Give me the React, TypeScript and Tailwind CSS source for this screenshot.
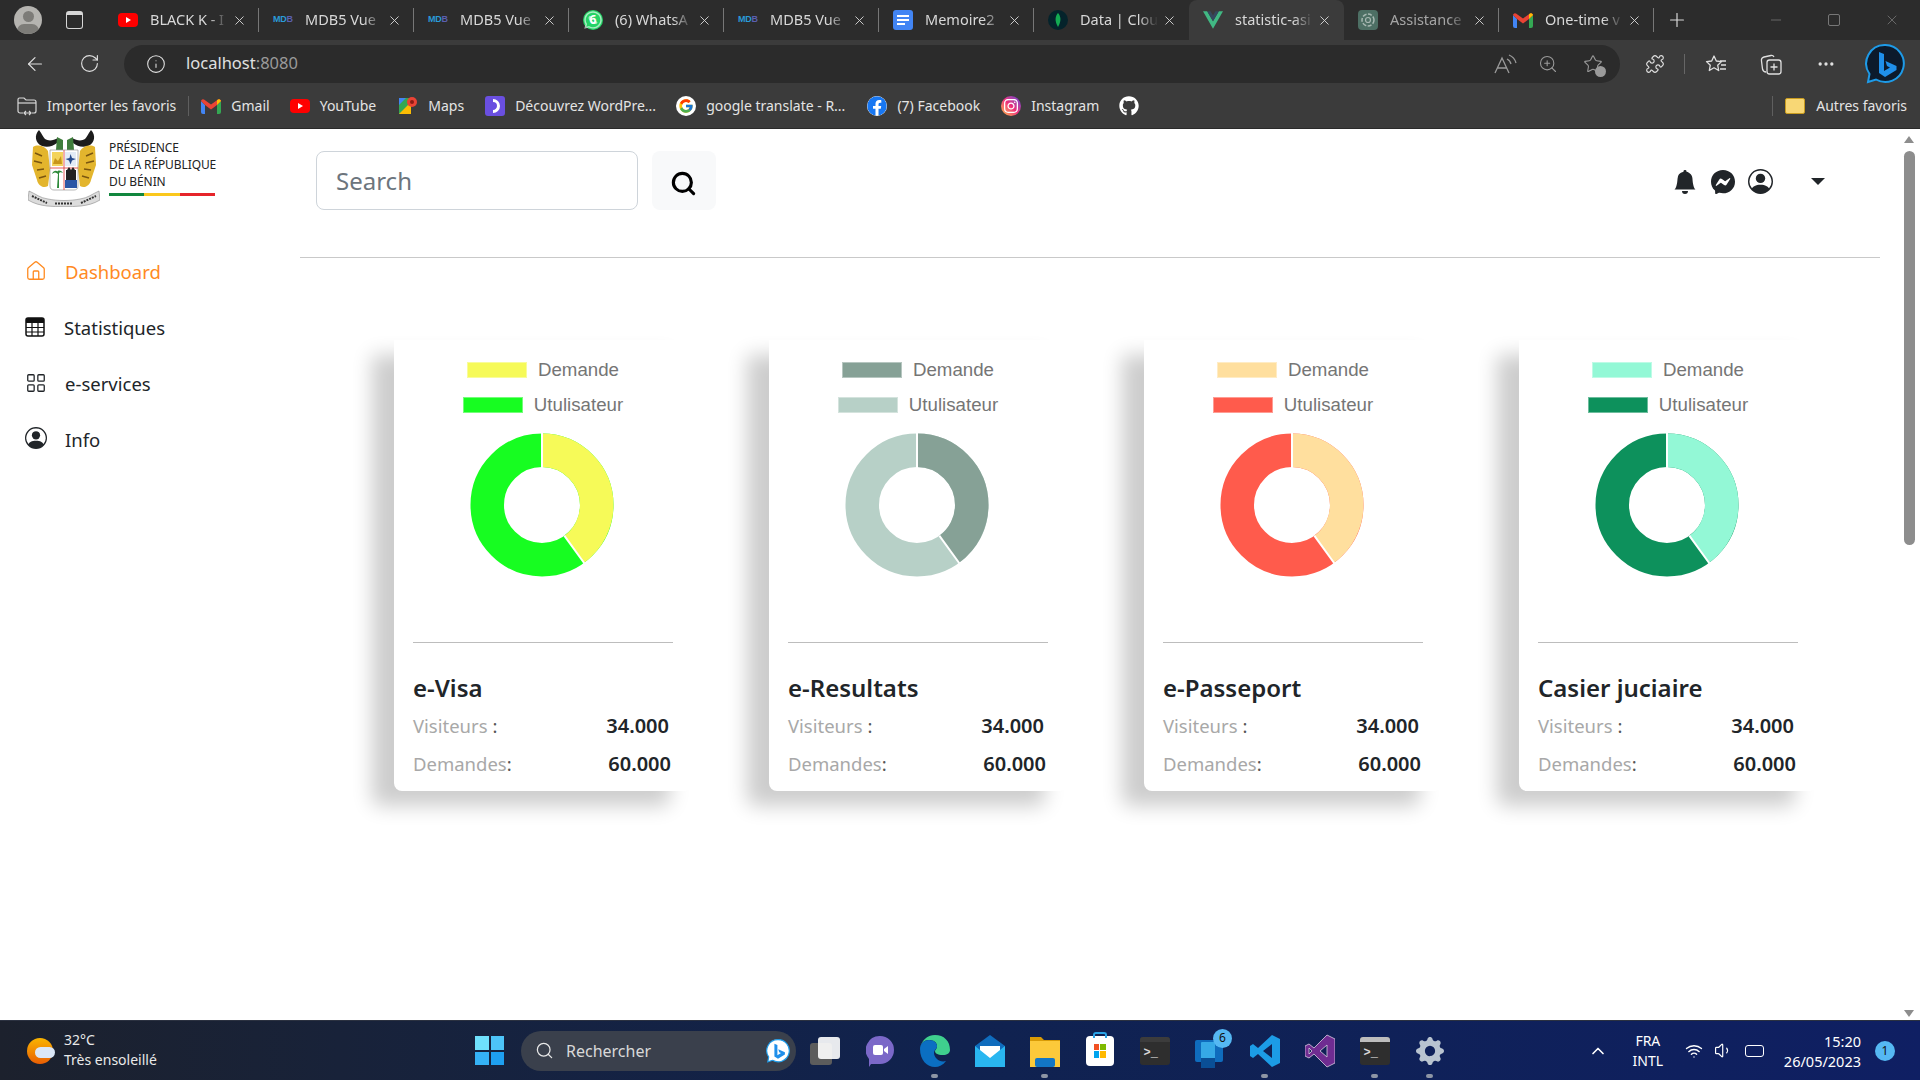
import { ArrowLeft, Info, Minus, MoreHorizontal, Plus, Puzzle, RotateCw, Search, Star, X, ZoomIn, ChevronUp, Wifi, Volume1, LayoutGrid, House } from "lucide-react";
import { BsBellFill, BsMessenger, BsPersonCircle, BsGearFill } from "react-icons/bs";
import { FaFacebook, FaGithub, FaInstagram, FaWhatsapp } from "react-icons/fa";
import { FcGoogle } from "react-icons/fc";

const YoutubeIcon = () => (
  <svg viewBox="0 0 20 20" className="w-5 h-5">
    <rect x="0" y="3" width="20" height="14" rx="4" fill="#f00" />
    <path d="M8 7l5 3-5 3z" fill="#fff" />
  </svg>
);

const MdbIcon = () => (
  <span className="w-5 text-[9px] font-bold tracking-tight text-[#2a9bd8] font-['Liberation_Sans',sans-serif]">
    MD<span className="text-[#5a5fb0]">B</span>
  </span>
);

const GmailIcon = () => (
  <svg viewBox="0 0 20 16" className="w-5 h-4">
    <path d="M0 3v11a2 2 0 0 0 2 2h2V7z" fill="#4285f4" />
    <path d="M20 3v11a2 2 0 0 1-2 2h-2V7z" fill="#34a853" />
    <path d="M0 3l4 4 6 4.500 6-4.500 4-4a2 2 0 0 0-3-1.500L10 6.500 3 1.500A2 2 0 0 0 0 3z" fill="#ea4335" />
    <path d="M16 7l4-4a2 2 0 0 0-3-1.500L16 2.200z" fill="#fbbc04" />
  </svg>
);

const VueIcon = () => (
  <svg viewBox="0 0 24 21" className="w-5 h-5">
    <path d="M0 0h5l7 12L19 0h5L12 21z" fill="#41b883" />
    <path d="M5 0h4l3 5 3-5h4l-7 12z" fill="#34495e" />
  </svg>
);

const DocsIcon = () => (
  <svg viewBox="0 0 20 20" className="w-5 h-5">
    <rect x="0" y="0" width="20" height="20" rx="3" fill="#4285f4" />
    <path d="M4 5h12v2H4zM4 9h12v2H4zM4 13h8v2H4z" fill="#fff" />
  </svg>
);

const MongoIcon = () => (
  <svg viewBox="0 0 20 20" className="w-5 h-5">
    <circle cx="10" cy="10" r="10" fill="#04232b" />
    <path d="M10 3c3 3.500 3.500 8 0 14-3.500-6-3-10.500 0-14z" fill="#13aa52" />
  </svg>
);

const GptIcon = () => (
  <svg viewBox="0 0 20 20" className="w-5 h-5">
    <rect width="20" height="20" rx="4" fill="#4d6f64" />
    <circle cx="10" cy="10" r="6" fill="none" stroke="#a7b8b2" strokeWidth="1.500" strokeDasharray="4 1.500" />
    <circle cx="10" cy="10" r="2.500" fill="none" stroke="#a7b8b2" strokeWidth="1.200" />
  </svg>
);

const WhatsappIcon = () => (
  <span className="w-5 h-5 rounded-full bg-[#25d366] flex items-center justify-center text-white text-[12px] font-bold relative">
    <FaWhatsapp className="absolute w-5 h-5 text-white opacity-60" />
    6
  </span>
);

const MapsIcon = () => (
  <svg viewBox="0 0 20 20" className="w-5 h-5">
    <path d="M1 2h12v16H1z" fill="#34a853" />
    <path d="M1 18L13 6v12z" fill="#fbbc04" />
    <path d="M1 2h7L1 9z" fill="#4285f4" />
    <circle cx="14" cy="6" r="5" fill="#ea4335" />
    <circle cx="14" cy="6" r="2" fill="#8e1c14" />
  </svg>
);

const WpIcon = () => (
  <svg viewBox="0 0 20 20" className="w-5 h-5">
    <rect width="20" height="20" rx="3" fill="#6a4fe0" />
    <path d="M8 4.500a5.500 5.500 0 0 1 0 11" fill="none" stroke="#fff" strokeWidth="3" />
  </svg>
);

const BingIcon = ({ big }: { big?: boolean }) => (
  <svg viewBox="0 0 40 40" className={big ? "w-[40px] h-[40px]" : "w-[24px] h-[30px]"}>
    <path d="M20 1a18.500 18.500 0 1 1-9 34.500L3 38l1.500-8A18.500 18.500 0 0 1 20 1z" fill={big ? "#0c1a2c" : "#fff"} stroke="#1e9be8" strokeWidth="2" />
    <path d="M14 8l5 2v17l6-3.500-3-1.500-1.500-5 11 5v4l-11.500 7-6-4z" fill="#1f8fea" />
  </svg>
);

const FavoritesIcon = () => (
  <svg viewBox="0 0 22 20" fill="none" stroke="currentColor" strokeWidth="1.300" strokeLinejoin="round" className="w-[22px] h-[20px]">
    <path d="M9 2l2.300 5 5.200.6-3.800 3.600 1 5.300L9 13.800l-4.700 2.700 1-5.300L1.500 7.600 6.700 7z" />
    <path d="M15 7h6M16 11h5M15 15h6" />
  </svg>
);

const CollectionsIcon = () => (
  <svg viewBox="0 0 22 22" fill="none" stroke="currentColor" strokeWidth="1.300" className="w-[22px] h-[22px]">
    <path d="M6 19c-2 0-3-1-3.500-3L1.500 8c-.3-2 .5-3.500 2.500-4l7-1.500c1.500-.3 2.500.5 3 1.500" />
    <rect x="7" y="7" width="14" height="14" rx="2.500" />
    <path d="M14 10.500v7M10.500 14h7" />
  </svg>
);

const ReadAloudIcon = () => (
  <svg viewBox="0 0 24 22" fill="none" stroke="currentColor" strokeWidth="1.300" className="w-[24px] h-[22px]">
    <path d="M2 20L9 5l7 15M4.500 15h9" />
    <path d="M14 6c2 1 3.500 2.500 4 5M16 2c3.500 1.500 6 4 7 8" />
  </svg>
);

const ImportIcon = () => (
  <svg viewBox="0 0 20 20" fill="none" stroke="#d8d8d8" strokeWidth="1.200" className="w-5 h-5">
    <path d="M6 17H3a2 2 0 0 1-2-2V3.500A1.500 1.500 0 0 1 2.500 2H7l2 2h8a2 2 0 0 1 2 2v9a2 2 0 0 1-2 2h-2" />
    <path d="M1 7h18" />
    <path d="M7 17h7M9 15l-2 2 2 2M12 15l2 2-2 2" />
  </svg>
);

const tabs = [
  { title: "BLACK K - I", icon: <YoutubeIcon /> },
  { title: "MDB5 Vue", icon: <MdbIcon /> },
  { title: "MDB5 Vue", icon: <MdbIcon /> },
  { title: "(6) WhatsA", icon: <WhatsappIcon /> },
  { title: "MDB5 Vue", icon: <MdbIcon /> },
  { title: "Memoire2", icon: <DocsIcon /> },
  { title: "Data | Clou", icon: <MongoIcon /> },
  { title: "statistic-asi", icon: <VueIcon />, active: true },
  { title: "Assistance", icon: <GptIcon /> },
  { title: "One-time v", icon: <GmailIcon /> },
];

const bookmarks = [
  { name: "Gmail", icon: <GmailIcon />, gap: "ml-[12px]" },
  { name: "YouTube", icon: <YoutubeIcon />, gap: "ml-[20px]" },
  { name: "Maps", icon: <MapsIcon />, gap: "ml-[22px]" },
  { name: "Découvrez WordPre...", icon: <WpIcon />, gap: "ml-[21px]" },
  { name: "google translate - R...", icon: <FcGoogle className="w-5 h-5 bg-white rounded-full p-[2px]" />, gap: "ml-[20px]" },
  { name: "(7) Facebook", icon: <FaFacebook className="w-5 h-5 text-[#1877f2] bg-white rounded-full" />, gap: "ml-[22px]" },
  {
    name: "Instagram",
    icon: (
      <span className="w-5 h-5 rounded-full bg-gradient-to-tr from-[#fdb52c] via-[#ee2a7b] to-[#6228d7] flex items-center justify-center">
        <FaInstagram className="w-4 h-4 text-white" />
      </span>
    ),
    gap: "ml-[21px]",
  },
];

const BrowserChrome = () => (
  <div className="shrink-0 font-['Noto_Sans',sans-serif]">
    {/* Tab strip */}
    <div className="h-[40px] bg-[#2c2c2c] flex items-start relative">
      <div className="w-[104px] h-[40px] shrink-0 flex items-center pl-[14px] gap-[24px]">
        <span className="w-[28px] h-[28px] rounded-full bg-[#b5b4b0] overflow-hidden relative flex justify-center">
          <span className="absolute top-[5px] w-[11px] h-[11px] rounded-full bg-[#7d7c78]" />
          <span className="absolute top-[18px] w-[22px] h-[14px] rounded-full bg-[#7d7c78]" />
        </span>
        <span className="w-[17px] h-[18px] rounded-[3px] border border-[#d6d6d6] border-t-[4px]" />
      </div>
      {tabs.map((tab, idx) => (
        <div
          key={idx}
          className={`w-[155px] shrink-0 relative z-10 ${tab.active ? "bg-[#3b3b3b] rounded-t-lg h-[45px]" : "h-[40px]"}`}
        >
          <div className="h-[40px] flex items-center pl-[14px] pr-[12px]">
            <span className="w-5 flex justify-center shrink-0">{tab.icon}</span>
            <span className={`ml-3 w-[78px] whitespace-nowrap overflow-hidden text-[14.500px] text-[#d8d8d8] [mask-image:linear-gradient(to_right,black_75%,transparent)] ${tab.title.startsWith("Assist") ? "opacity-70" : ""}`}>
              {tab.title}
            </span>
            <X className="ml-auto w-[15px] h-[15px] text-[#d4d4d4]" strokeWidth={1.500} />
          </div>
          {!tab.active && idx !== 6 && <span className="absolute right-0 top-[8px] h-[24px] w-px bg-[#777]" />}
        </div>
      ))}
      <div className="h-[40px] flex items-center ml-[12px]">
        <Plus className="w-[22px] h-[22px] text-[#d8d8d8]" strokeWidth={1.300} />
      </div>
      <div className="ml-auto h-[40px] flex items-center gap-[44px] pr-[20px] text-[#777]">
        <Minus className="w-4 h-4" strokeWidth={1.200} />
        <span className="w-[12px] h-[12px] border border-[#777] rounded-[2px]" />
        <X className="w-[16px] h-[16px]" strokeWidth={1.200} />
      </div>
    </div>

    {/* Address bar */}
    <div className="h-[45px] pt-[2px] bg-[#3b3b3b] flex items-center text-[#e0e0e0]">
      <ArrowLeft className="ml-[24px] w-[22px] h-[22px]" strokeWidth={1.300} />
      <RotateCw className="ml-[33px] w-[21px] h-[21px]" strokeWidth={1.300} />
      <div className="ml-[24px] w-[1496px] h-[38px] rounded-full bg-[#2b2b2b] flex items-center">
        <Info className="ml-[22px] w-[20px] h-[20px]" strokeWidth={1.300} />
        <span className="ml-[20px] text-[16.500px]">localhost<span className="text-[#9a9a9a]">:8080</span></span>
        <div className="ml-auto flex items-center pr-[17px] text-[#9a9a9a]">
          <ReadAloudIcon />
          <ZoomIn className="ml-[21px] w-[20px] h-[20px]" strokeWidth={1.300} />
          <span className="relative ml-[25px]">
            <Star className="w-[20px] h-[20px]" strokeWidth={1.300} />
            <span className="absolute -right-[3px] -bottom-[3px] w-[11px] h-[11px] rounded-full bg-[#9a9a9a]" />
          </span>
        </div>
      </div>
      <Puzzle className="ml-[25px] w-[20px] h-[20px]" strokeWidth={1.400} />
      <span className="ml-[19px] w-px h-[20px] bg-[#666]" />
      <span className="ml-[20px]"><FavoritesIcon /></span>
      <span className="ml-[33px]"><CollectionsIcon /></span>
      <MoreHorizontal className="ml-[34px] w-[20px] h-[20px]" strokeWidth={2} />
      <span className="ml-[29px]"><BingIcon big /></span>
    </div>

    {/* Favorites bar */}
    <div className="h-[44px] pb-[2px] bg-[#3b3b3b] flex items-center text-[14px] text-[#e4e4e4] border-b border-[#2a2a2a]">
      <span className="ml-[17px]"><ImportIcon /></span>
      <span className="ml-[10px] whitespace-nowrap">Importer les favoris</span>
      <span className="ml-[12px] w-px h-[20px] bg-[#5f5f5f]" />
      {bookmarks.map((b) => (
        <div key={b.name} className={`flex items-center gap-[10px] ${b.gap}`}>
          {b.icon}
          <span className="whitespace-nowrap">{b.name}</span>
        </div>
      ))}
      <FaGithub className="ml-[20px] w-5 h-5 text-white" />
      <div className="ml-auto flex items-center pr-[13px]">
        <span className="w-px h-[20px] bg-[#5f5f5f] mr-[12px]" />
        <span className="w-[20px] h-[16px] bg-[#f8d775] border border-[#c89b1f] rounded-[2px]" />
        <span className="ml-[11px] whitespace-nowrap">Autres favoris</span>
      </div>
    </div>
  </div>
);

const BeninLogo = () => (
  <svg viewBox="0 0 72 78" className="w-[72px] h-[78px] shrink-0">
    {/* horns */}
    <path d="M11 1C6 6 7 14 14 17c6 2 11 0 15-3l1-5c-5 3-10 3-13 1-2-2-3-5-6-9z" fill="#1c1c1c" />
    <path d="M63 1c5 5 4 13-3 16-6 2-11 0-15-3l-1-5c5 3 10 3 13 1 2-2 3-5 6-9z" fill="#1c1c1c" />
    <path d="M29 8l6 3v10h-7zM45 8l-6 3v10h7z" fill="#3f7d3c" />
    {/* leopards */}
    <path d="M5 18c5-3 12-1 15 4l2 19-2 16c-5 3-10-1-11-6L4 36z" fill="#e3b52d" />
    <path d="M67 18c-5-3-12-1-15 4l-2 19 2 16c5 3 10-1 11-6l5-15z" fill="#e3b52d" />
    <path d="M7 24l7 3M6 32l8 2M9 41l7-1M11 49l7-2M65 24l-7 3M66 32l-8 2M63 41l-7-1M61 49l-7-2" stroke="#7a5610" strokeWidth="1.500" />
    {/* shield */}
    <path d="M22 21h28v36c0 3-2 4-4 4H26c-2 0-4-1-4-4z" fill="#fff" stroke="#999" strokeWidth=".7" />
    <rect x="24" y="23" width="11" height="14" fill="#f3d35b" />
    <path d="M25 35l2-6 3 3 3-5 1 8z" fill="#c8951a" />
    <rect x="37" y="23" width="11" height="14" fill="#e3ebf6" />
    <path d="M42.500 25l1.500 4 4 1-4 1.500-1.500 4-1.500-4-3.500-1.500 4-1z" fill="#274a8c" />
    <path d="M22 39h28M36 21v40" stroke="#d33" strokeWidth=".8" />
    <path d="M30 45c-2-2-4-2-6 0 1-3 4-4 5.500-2.500C30 41 33 41 35 44c-2-1-3.500-1-4 .5V59h-2z" fill="#2d8a3a" />
    <rect x="38" y="41" width="10" height="10" fill="#222" />
    <path d="M39 41l2-3 2 3 2-3 2 3z" fill="#222" />
    <rect x="37" y="51" width="12" height="8" fill="#2b56a6" />
    {/* motto ribbon */}
    <path d="M1 62c7 3 11 7 19 8 10 2 22 2 32 0 8-1 12-5 19-8l1 9c-7 4-12 5-19 6-11 1-23 1-34 0-7-1-12-2-19-6z" fill="#dcdcdc" stroke="#8a8a8a" strokeWidth=".6" />
    <path d="M4 67l15 7M27 74.500h18M53 74l15-7" stroke="#333" strokeWidth="2" strokeDasharray="2 1" />
  </svg>
);

const TableIcon = () => (
  <svg viewBox="0 0 20 20" className="w-[20px] h-[20px]">
    <rect x="1" y="1" width="18" height="18" rx="2" fill="none" stroke="#111" strokeWidth="1.500" />
    <path d="M1 3a2 2 0 0 1 2-2h14a2 2 0 0 1 2 2v3H1z" fill="#111" />
    <path d="M1 10.500h18M1 15h18M7 6v13M13 6v13" stroke="#111" strokeWidth="1.200" />
  </svg>
);

const navItems = [
  { name: "Dashboard", icon: <House className="w-[22px] h-[22px] -mt-[3px]" strokeWidth={1.400} />, cls: "text-[#ff8a1f]", iconBox: "ml-[25px] mr-[18px]" },
  { name: "Statistiques", icon: <TableIcon />, cls: "text-[#212529]", iconBox: "ml-[25px] mr-[19px] -mt-[2px]" },
  { name: "e-services", icon: <LayoutGrid className="w-[22px] h-[22px]" strokeWidth={1.400} />, cls: "text-[#212529]", iconBox: "ml-[25px] mr-[18px] -mt-[3px]" },
  { name: "Info", icon: <BsPersonCircle className="w-[22px] h-[22px]" />, cls: "text-[#212529]", iconBox: "ml-[25px] mr-[18px] -mt-[5px]" },
];

const Sidebar = () => (
  <aside className="w-[300px] shrink-0">
    <div className="h-[115px] flex items-start pl-[28px]">
      <BeninLogo />
      <div className="ml-[9px] mt-[10px] text-[12px] leading-[17px] text-[#222] tracking-[-0.1px] whitespace-nowrap">
        <div>PRÉSIDENCE</div>
        <div>DE LA RÉPUBLIQUE</div>
        <div>DU BÉNIN</div>
        <div className="mt-[3px] w-[106px] h-[3px] flex">
          <span className="flex-1 bg-[#12873e]" />
          <span className="flex-1 bg-[#fbc81d]" />
          <span className="flex-1 bg-[#e6242a]" />
        </div>
      </div>
    </div>
    <nav>
      {navItems.map((item) => (
        <div key={item.name} className={`h-[56px] flex items-center text-[18.500px] ${item.cls}`}>
          <span className={item.iconBox}>{item.icon}</span>
          {item.name}
        </div>
      ))}
    </nav>
  </aside>
);

const Donut = ({ first, second }: { first: string; second: string }) => (
  <svg viewBox="-72 -72 144 144" className="w-[144px] h-[144px] block mx-auto">
    <circle r="54.750" fill="none" stroke={second} strokeWidth="33.500" />
    <circle r="54.750" fill="none" stroke={first} strokeWidth="33.500" pathLength={100} strokeDasharray="40 60" transform="rotate(-90)" />
    <path d="M0 -72V-37M22.300 30.700L42.500 58.500" stroke="#fff" strokeWidth="2" />
  </svg>
);

const LegendRow = ({ color, label }: { color: string; label: string }) => (
  <div className="flex items-center justify-center gap-[11px] h-[16px] text-[18.700px] text-[#757575] font-['Liberation_Sans',sans-serif]">
    <span className={`w-[60px] h-[16px] border border-white/40 ${color}`} />
    <span>{label}</span>
  </div>
);

const cards = [
  { title: "e-Visa", c1: "#f6fa58", c2: "#17fd21", b1: "bg-[#f6fa58]", b2: "bg-[#17fd21]" },
  { title: "e-Resultats", c1: "#86a196", c2: "#b7d0c7", b1: "bg-[#86a196]", b2: "bg-[#b7d0c7]" },
  { title: "e-Passeport", c1: "#ffdf9e", c2: "#ff5b4c", b1: "bg-[#ffdf9e]", b2: "bg-[#ff5b4c]" },
  { title: "Casier juciaire", c1: "#93f8d6", c2: "#0d915c", b1: "bg-[#93f8d6]", b2: "bg-[#0d915c]" },
];

const StatCard = ({ card }: { card: (typeof cards)[number] }) => (
  <div className="w-[298px] h-[451px] bg-white rounded-b-lg shadow-[-22px_15px_20px_rgba(0,0,0,0.2)] pt-[22px]">
    <div className="flex flex-col gap-[19px]">
      <LegendRow color={card.b1} label="Demande" />
      <LegendRow color={card.b2} label="Utulisateur" />
    </div>
    <div className="mt-[20px] pr-[2px]">
      <Donut first={card.c1} second={card.c2} />
    </div>
    <div className="mx-[19px] mt-[65px] border-t border-[#bdbdbd]" />
    <h3 className="ml-[19px] mt-[27px] text-[24px] leading-[36px] font-semibold text-[#212529]">{card.title}</h3>
    <div className="ml-[19px] mr-[23px] mt-[1px] h-[38px] flex items-center justify-between text-[18.500px]">
      <span className="text-[#a8a8a8]">Visiteurs <span className="text-[#555]">:</span></span>
      <span className="text-[20px] font-semibold text-[#212529]">34.000</span>
    </div>
    <div className="ml-[19px] mr-[21px] h-[38px] flex items-center justify-between text-[18.500px]">
      <span className="text-[#a8a8a8]">Demandes<span className="text-[#555]">:</span></span>
      <span className="text-[20px] font-semibold text-[#212529]">60.000</span>
    </div>
  </div>
);

const Main = () => (
  <main className="flex-1 min-w-0">
    <header className="h-[129px] border-b border-[#c9c9c9] flex items-start pt-[22px] pl-[16px]">
      <div className="w-[322px] h-[59px] rounded-lg border border-[#ced4da] flex items-center pl-[19px] text-[24px] text-[#6c757d]">Search</div>
      <button className="ml-[14px] w-[64px] h-[59px] rounded-lg bg-[#f8f9fa] flex items-center justify-center pt-[5px] pr-[2px]">
        <Search className="w-[27px] h-[27px] text-black" strokeWidth={2.800} />
      </button>
      <div className="ml-auto flex items-center h-[59px] pt-[2px] text-[#212529] pr-[55px]">
        <BsBellFill className="w-[24px] h-[24px]" />
        <BsMessenger className="ml-[14px] w-[24px] h-[24px]" />
        <BsPersonCircle className="ml-[13px] w-[25px] h-[25px]" />
        <span className="ml-[38px] w-0 h-0 border-x-[7px] border-x-transparent border-t-[7px] border-t-[#212529]" />
      </div>
    </header>
    <section className="mt-[82px] pl-[94px] flex gap-[77px]">
      {cards.map((card) => (
        <StatCard key={card.title} card={card} />
      ))}
    </section>
  </main>
);

const Scrollbar = () => (
  <div className="w-[40px] shrink-0 flex flex-col items-end pr-[5px] pt-[7px] pb-[3px]">
    <span className="w-0 h-0 mr-[1px] border-x-[5px] border-x-transparent border-b-[7px] border-b-[#8d8d8d]" />
    <span className="mt-[8px] w-[11px] h-[394px] rounded-full bg-[#8d8d8d]" />
    <span className="mt-auto w-0 h-0 mr-[1px] border-x-[5px] border-x-transparent border-t-[7px] border-t-[#8d8d8d]" />
  </div>
);

const TerminalIcon = ({ top }: { top: string }) => (
  <span className="w-[30px] h-[28px] rounded-[3px] bg-[#2e2e2e] relative block">
    <span className={`absolute top-0 left-0 w-full h-[5px] rounded-t-[3px] ${top}`} />
    <span className="absolute left-[4px] top-[9px] text-[12px] leading-[14px] font-bold text-[#d8d8d8] font-['Liberation_Mono',monospace]">&gt;_</span>
  </span>
);

const taskIcons = [
  {
    key: "views",
    node: (
      <span className="relative block w-[30px] h-[28px]">
        <span className="absolute left-0 bottom-0 w-[22px] h-[22px] rounded-[3px] bg-[#5c5c5c]" />
        <span className="absolute right-0 top-0 w-[22px] h-[22px] rounded-[3px] bg-white/90" />
      </span>
    ),
  },
  {
    key: "teams",
    node: (
      <svg viewBox="0 0 28 32" className="w-[28px] h-[32px]">
        <path d="M14 1a14 14 0 0 1 0 28H5l-2 3v-8A14 14 0 0 1 14 1z" fill="#7b68c8" />
        <rect x="7" y="10" width="10" height="10" rx="2" fill="#fff" />
        <path d="M18 14l4-3v8l-4-3z" fill="#fff" />
      </svg>
    ),
  },
  {
    key: "edge",
    dot: true,
    node: (
      <svg viewBox="0 0 30 34" className="w-[30px] h-[34px]">
        <path d="M15 1c9 0 15 6 15 15 0 3-3 5-7 5-6 0-8-2-8-4 0-1 2-2 2-5 0-4-4-6-8-6C3 6 0 11 0 15 1 7 7 1 15 1z" fill="#3fcf8e" />
        <path d="M0 15c0-6 5-9 9-9 5 0 8 3 8 6 0 3-3 4-3 7 0 5 6 10 12 8-3 4-7 6-11 6C7 33 0 26 0 15z" fill="#0b6fc2" />
      </svg>
    ),
  },
  {
    key: "mail",
    node: (
      <svg viewBox="0 0 30 34" className="w-[30px] h-[34px]">
        <path d="M0 12L15 1l15 11v20H0z" fill="#0f6cbd" />
        <path d="M5 12h20v8l-10 5-10-5z" fill="#fff" />
        <path d="M0 12l15 12 15-12v21H0z" fill="#29b6f0" />
      </svg>
    ),
  },
  {
    key: "files",
    dot: true,
    node: (
      <svg viewBox="0 0 30 32" className="w-[30px] h-[32px]">
        <path d="M0 2h11l3 3h16v4H0z" fill="#d99b06" />
        <rect y="6" width="30" height="26" fill="#fcc93a" />
        <rect x="5" y="23" width="20" height="9" rx="2" fill="#1276c5" />
      </svg>
    ),
  },
  {
    key: "store",
    node: (
      <span className="relative w-[28px] h-[30px] bg-white rounded-[4px] grid grid-cols-2 gap-px p-[8px]">
        <span className="absolute -top-[4px] left-[7px] w-[14px] h-[6px] rounded-t-[3px] border-2 border-b-0 border-[#2aa3e6]" />
        <span className="bg-[#f25022]" />
        <span className="bg-[#7fba00]" />
        <span className="bg-[#00a4ef]" />
        <span className="bg-[#ffb900]" />
      </span>
    ),
  },
  { key: "term1", node: <TerminalIcon top="bg-[#3c3c3c]" /> },
  {
    key: "outlook",
    badge: true,
    node: (
      <svg viewBox="0 0 30 34" className="w-[30px] h-[34px]">
        <rect x="0" y="6" width="28" height="22" rx="2" fill="#0f6cbd" />
        <rect x="6" y="8" width="14" height="26" rx="1" fill="#36a9e6" />
        <rect x="6" y="24" width="14" height="10" fill="#0a4f96" />
      </svg>
    ),
  },
  {
    key: "vscode",
    dot: true,
    node: (
      <svg viewBox="0 0 30 34" className="w-[30px] h-[34px]">
        <path d="M22 1l8 4v24l-8 4-14-13-5 4-3-2v-10l3-2 5 4zm0 9L13 17l9 7z" fill="#1c9ce6" />
      </svg>
    ),
  },
  {
    key: "vs",
    node: (
      <svg viewBox="0 0 30 34" className="w-[30px] h-[34px]">
        <path d="M22 1l8 4v24l-8 4-13-13-5 4-4-2V12l4-2 5 4zm0 10l-7 6 7 6zM4 14v6l3-3z" fill="#6f2c91" stroke="#d9cde2" strokeWidth=".8" />
      </svg>
    ),
  },
  { key: "term2", dot: true, node: <TerminalIcon top="bg-[#bdbdbd]" /> },
  { key: "settings", dot: true, node: <BsGearFill className="w-[28px] h-[28px] text-[#b9c4d0]" /> },
];

const Taskbar = () => (
  <footer className="h-[60px] shrink-0 border-t border-[#2b3140] bg-gradient-to-r from-[#1c212d] via-[#10224f] to-[#0f1f63] flex items-center text-white font-['Noto_Sans',sans-serif]">
    <div className="ml-[27px] w-[448px] shrink-0 flex items-center">
      <span className="relative w-[26px] h-[26px] rounded-full bg-gradient-to-b from-[#f8b400] to-[#e85d04]">
        <span className="absolute left-[8px] top-[9px] w-[20px] h-[11px] rounded-full bg-[#dbe7f7]" />
      </span>
      <div className="ml-[11px] -mt-[2px] text-[14px] leading-[20px] text-[#e9e9e9]">
        <div>32°C</div>
        <div>Très ensoleillé</div>
      </div>
    </div>
    <div className="w-[29px] h-[29px] grid grid-cols-2 gap-[2px] shrink-0">
      <span className="bg-[#6fe0fc]" />
      <span className="bg-[#4dc4f8]" />
      <span className="bg-[#35b2f6]" />
      <span className="bg-[#1e9ff0]" />
    </div>
    <div className="ml-[17px] w-[275px] h-[40px] rounded-full bg-[#3a404c] flex items-center pl-[14px] pr-[6px] shrink-0">
      <Search className="w-[19px] h-[19px] text-[#e8e8e8]" strokeWidth={1.600} />
      <span className="ml-[12px] text-[16px] text-[#d9d9d9]">Rechercher</span>
      <span className="ml-auto"><BingIcon /></span>
    </div>
    <div className="ml-px flex items-center">
      {taskIcons.map((icon) => (
        <div key={icon.key} className="w-[55px] h-[60px] flex items-center justify-center relative">
          {icon.node}
          {icon.badge && (
            <span className="absolute top-[8px] left-[31px] w-[19px] h-[19px] rounded-full bg-[#55b8f3] text-[#111] text-[12px] flex items-center justify-center">6</span>
          )}
          {icon.dot && <span className="absolute bottom-[3px] w-[7px] h-[4px] rounded-full bg-[#8d95a5]" />}
        </div>
      ))}
    </div>
    <div className="ml-auto flex items-center pr-[25px]">
      <ChevronUp className="w-[20px] h-[20px]" strokeWidth={2} />
      <div className="ml-[15px] w-[50px] text-center text-[14px] leading-[20px]">
        <div>FRA</div>
        <div>INTL</div>
      </div>
      <Wifi className="ml-[12px] w-[18px] h-[18px]" strokeWidth={1.800} />
      <Volume1 className="ml-[11px] w-[19px] h-[19px]" strokeWidth={1.500} />
      <span className="ml-[12px] w-[19px] h-[12px] rounded-[3px] border-[1.500px] border-white" />
      <div className="ml-[20px] text-right text-[14.500px] leading-[20px] whitespace-nowrap">
        <div>15:20</div>
        <div>26/05/2023</div>
      </div>
      <span className="ml-[14px] w-[20px] h-[20px] rounded-full bg-[#55b8f3] text-[#111] text-[12px] flex items-center justify-center">1</span>
    </div>
  </footer>
);

export default function App() {
  return (
    <div className="w-[1920px] h-[1080px] overflow-hidden flex flex-col bg-white font-['Noto_Sans',sans-serif]">
      <BrowserChrome />
      <div className="flex-1 min-h-0 flex">
        <Sidebar />
        <Main />
        <Scrollbar />
      </div>
      <Taskbar />
    </div>
  );
}
